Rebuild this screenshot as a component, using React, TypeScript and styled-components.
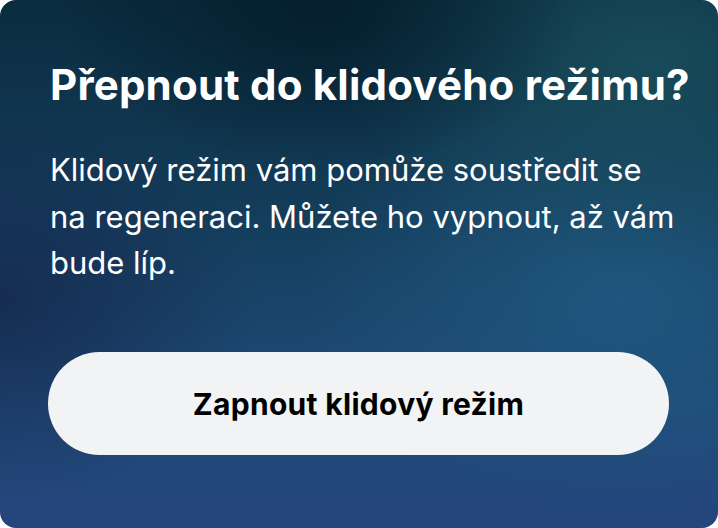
import React from "react";
import styled, { createGlobalStyle } from "styled-components";

const Global = createGlobalStyle`
  html, body { margin: 0; padding: 0; background: #ffffff; }
  #root { width: 718px; height: 528px; }
`;

const Card = styled.div`
  box-sizing: border-box;
  width: 718px;
  height: 528px;
  border-radius: 16px;
  overflow: hidden;
  padding: 59px 40px 73px 50px;
  display: flex;
  flex-direction: column;
  font-family: Inter, "Noto Sans", sans-serif;
  color: #ffffff;
  background:
    radial-gradient(ellipse 260px 160px at 320px 10px, rgba(4, 28, 42, 0.85), rgba(4, 28, 42, 0) 100%),
    radial-gradient(ellipse 320px 210px at 650px 60px, rgba(26, 80, 94, 0.85), rgba(26, 80, 94, 0) 100%),
    radial-gradient(ellipse 320px 220px at 620px 300px, rgba(32, 88, 128, 0.9), rgba(32, 88, 128, 0) 100%),
    radial-gradient(ellipse 260px 200px at 0px 300px, rgba(22, 42, 80, 0.9), rgba(22, 42, 80, 0) 100%),
    linear-gradient(180deg, #0a2c3e 0%, #153f5e 45%, #1f4a78 75%, #25457d 100%);
`;

const Title = styled.h1`
  margin: 0;
  font-size: 42px;
  font-weight: 700;
  line-height: 52px;
  letter-spacing: 0.2px;
  white-space: nowrap;
`;

const Body = styled.p`
  margin: 36px 0 0 0;
  font-size: 31px;
  font-weight: 400;
  line-height: 46.5px;
  width: 626px;
`;

const Spacer = styled.div`
  flex: 1;
`;

const Button = styled.button`
  box-sizing: border-box;
  flex: none;
  width: 621px;
  height: 103px;
  margin-left: -2px;
  border: none;
  border-radius: 52px;
  background: #f2f3f5;
  color: #000000;
  font-family: Inter, "Noto Sans", sans-serif;
  font-size: 30px;
  font-weight: 700;
  letter-spacing: 0.3px;
  cursor: pointer;
`;

export default function App() {
  return (
    <>
      <Global />
      <Card>
        <Title>Přepnout do klidového režimu?</Title>
        <Body>
          Klidový režim vám pomůže soustředit se na regeneraci. Můžete ho vypnout, až vám bude líp.
        </Body>
        <Spacer />
        <Button>Zapnout klidový režim</Button>
      </Card>
    </>
  );
}
